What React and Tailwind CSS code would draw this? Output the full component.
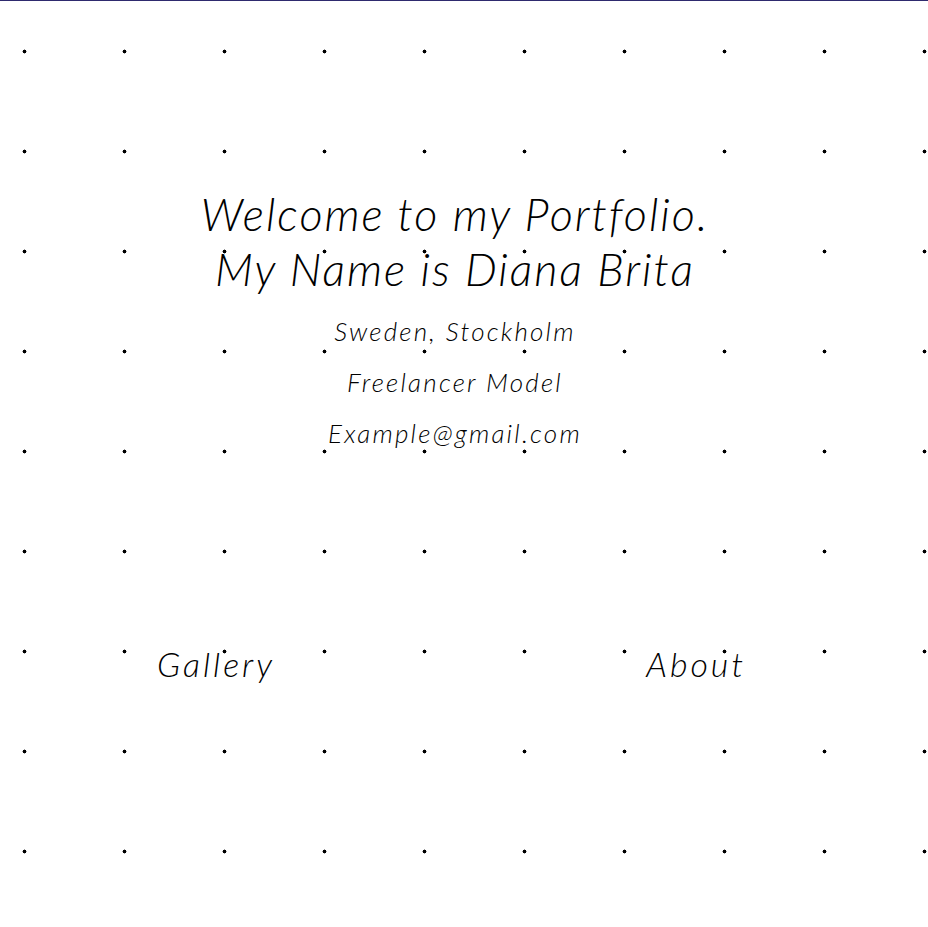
export default function App() {
  return (
    <div
      className="min-h-[927px] w-full border-t border-[#2e2a6e] bg-white text-black italic font-light"
      style={{
        fontFamily: "Lato, 'Open Sans', sans-serif",
        backgroundImage:
          "radial-gradient(circle at 24.5px 50.5px, #000 1.7px, transparent 2.2px)",
        backgroundSize: "100px 100px",
      }}
    >
      <div className="flex w-[910px] flex-col items-center pt-[186px]">
        <h1 className="text-center text-[45px] leading-[55px] font-light tracking-[2px]">
          Welcome to my Portfolio.
          <br />
          My Name is Diana Brita
        </h1>
        <div className="mt-[9px] flex flex-col items-center text-[26px] leading-[51px] tracking-[2.2px]">
          <p>Sweden, Stockholm</p>
          <p>Freelancer Model</p>
          <p>Example@gmail.com</p>
        </div>
      </div>
      <nav className="mt-[185px] flex justify-between pl-[157px] pr-[182px] text-[34px] leading-[40px] tracking-[3px]">
        <a>Gallery</a>
        <a>About</a>
      </nav>
    </div>
  );
}
